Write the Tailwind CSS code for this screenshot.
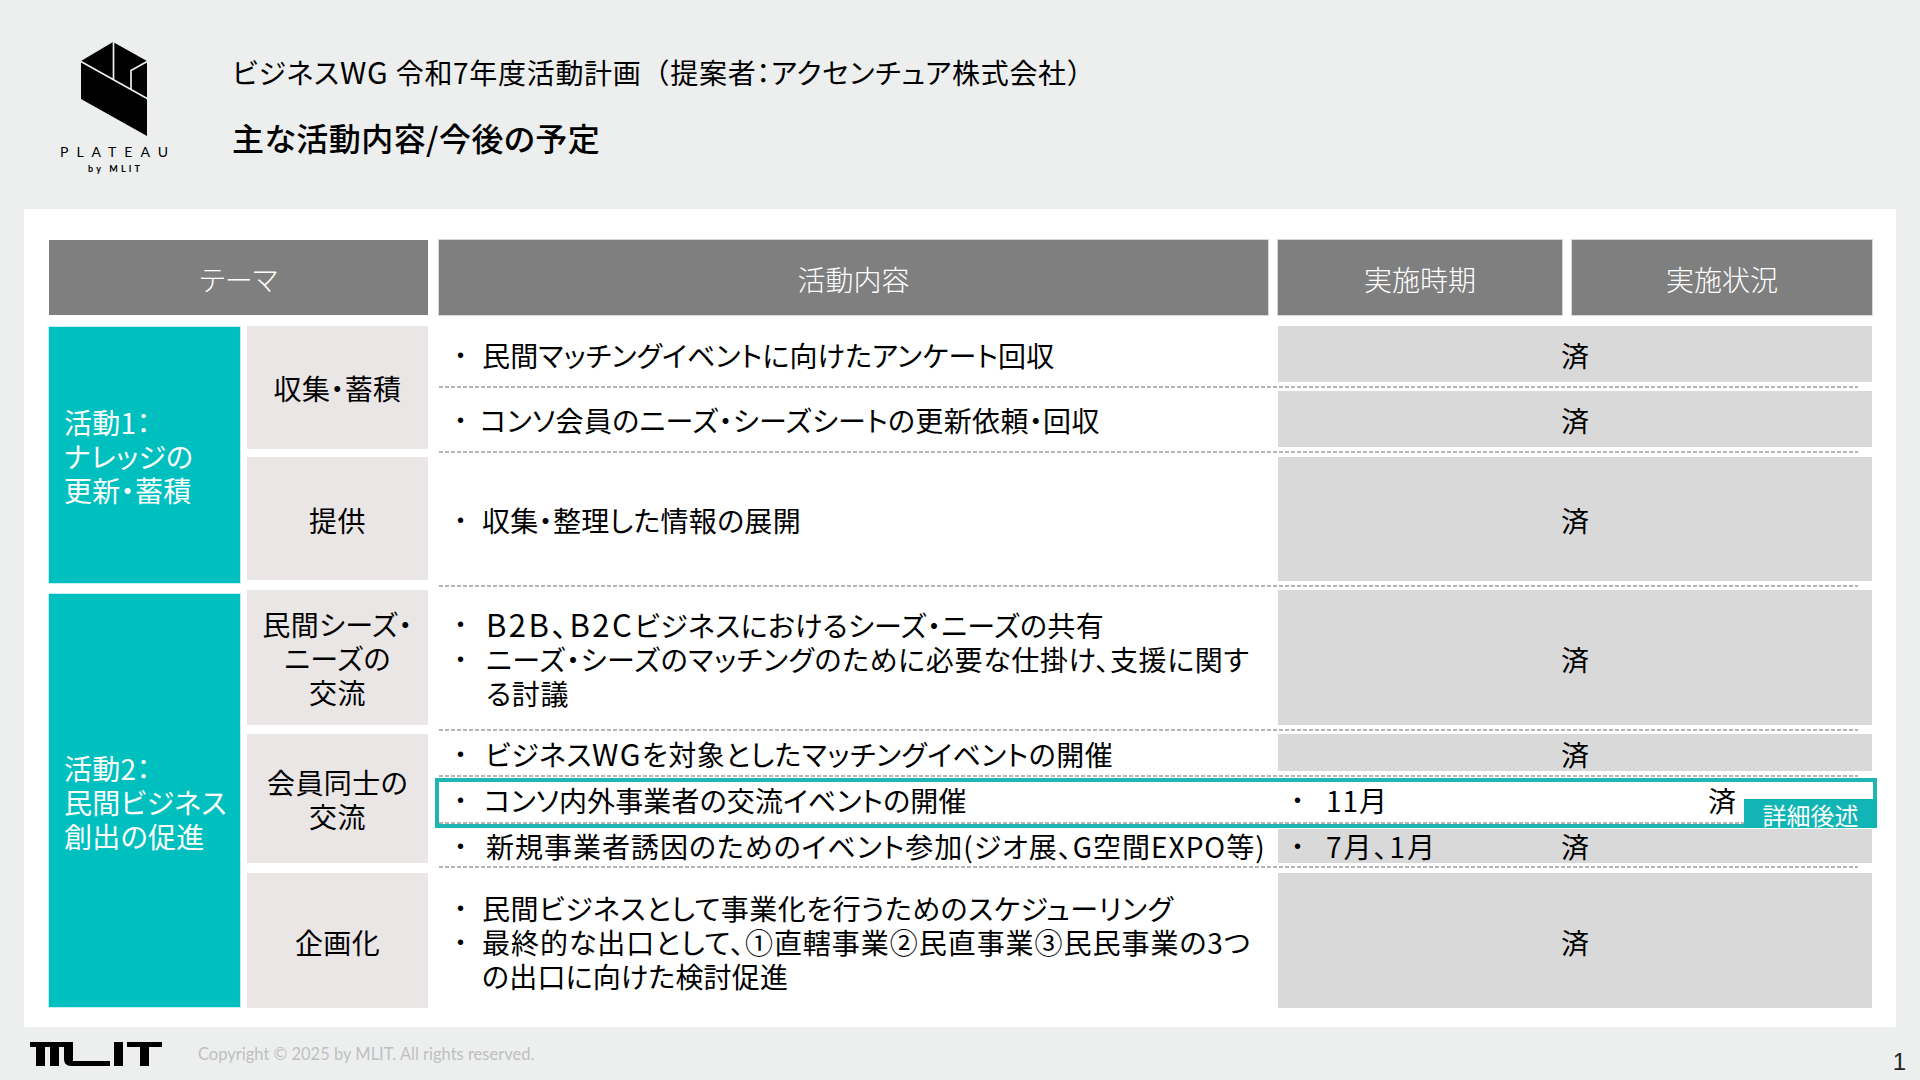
<!DOCTYPE html>
<html lang="ja">
<head>
<meta charset="UTF-8">
<title>ビジネスWG 令和7年度活動計画</title>
<script src="https://cdn.jsdelivr.net/npm/@tailwindcss/browser@4"></script>
</head>
<body class="w-[1920px] h-[1080px] overflow-hidden bg-[#edefef] text-black font-['Noto_Sans_CJK_JP',sans-serif] [font-feature-settings:'palt']">

<!-- header -->
<header class="h-[209px] flex pl-[40px] pt-[30px]">
  <svg width="150" height="150" viewBox="0 0 150 150" class="shrink-0">
    <path d="M41 31 L73 12 L107 31 V106 L41 69 Z" fill="#000"/>
    <path d="M73.500 11 V50 M40 31 L108 69 M108 31 L91 40.500 V59" fill="none" stroke="#edefef" stroke-width="1.700"/>
    <text x="20" y="127" font-size="14" textLength="108" lengthAdjust="spacing" font-family="Lato, sans-serif">PLATEAU</text>
    <text x="48" y="142" font-size="9" font-weight="700" textLength="52" lengthAdjust="spacing" font-family="Lato, sans-serif">by MLIT</text>
  </svg>
  <div class="ml-[42px] pt-[21px]">
    <h1 class="text-[28px] leading-[40px] font-normal tracking-[0.7px] whitespace-nowrap">ビジネス<span class="text-[30px] tracking-[1px]">WG</span> 令和7年度活動計画<span class="[font-feature-settings:normal]">（</span>提案者：アクセンチュア株式会社<span class="[font-feature-settings:normal]">）</span></h1>
    <h2 class="mt-[25px] text-[32px] leading-[40px] font-medium tracking-[0.45px]">主な活動内容/今後の予定</h2>
  </div>
</header>

<!-- table panel -->
<main class="mx-[24px] w-[1872px] h-[818px] bg-white pt-[31px] pl-[25px] text-[28px] leading-[34px] font-normal">
  <div class="flex text-white font-light">
    <div class="w-[379px] h-[75px] pt-[2px] bg-[#7f7f7f] flex items-center justify-center">テーマ</div>
    <div class="ml-[11px] w-[829px] h-[75px] pt-[2px] bg-[#7f7f7f] ring-1 ring-[#d8d8d8] flex items-center justify-center">活動内容</div>
    <div class="ml-[10px] w-[284px] h-[75px] pt-[2px] bg-[#7f7f7f] ring-1 ring-[#d8d8d8] flex items-center justify-center">実施時期</div>
    <div class="ml-[10px] w-[300px] h-[75px] pt-[2px] bg-[#7f7f7f] ring-1 ring-[#d8d8d8] flex items-center justify-center">実施状況</div>
  </div>

  <div class="flex mt-[11px]">
    <!-- theme column -->
    <div class="w-[191px] shrink-0 pt-[1px] text-white font-normal tracking-[0.3px]">
      <div class="h-[256px] pt-[2px] bg-[#00bfbf] ring-1 ring-[#c4eded] pl-[15px] flex items-center">活動1：<br>ナレッジの<br>更新・蓄積</div>
      <div class="mt-[11px] h-[413px] pt-[2px] bg-[#00bfbf] ring-1 ring-[#c4eded] pl-[15px] flex items-center">活動2：<br>民間ビジネス<br>創出の促進</div>
    </div>

    <!-- category column -->
    <div class="ml-[7px] w-[181px] shrink-0 text-center tracking-[0.4px]">
      <div class="h-[123px] bg-[#ebe6e6] flex items-center justify-center">収集・蓄積</div>
      <div class="mt-[8px] h-[123px] pt-[2px] bg-[#ebe6e6] flex items-center justify-center">提供</div>
      <div class="mt-[10px] h-[135px] bg-[#ebe6e6] flex items-center justify-center">民間シーズ・<br>ニーズの<br>交流</div>
      <div class="mt-[9px] h-[129px] bg-[#ebe6e6] flex items-center justify-center">会員同士の<br>交流</div>
      <div class="mt-[10px] h-[135px] pt-[3px] bg-[#ebe6e6] flex items-center justify-center">企画化</div>
    </div>

    <!-- activity rows -->
    <div class="ml-[11px] w-[1433px] shrink-0">
      <div class="flex h-[56px]">
        <div class="w-[829px] pt-[2px] pl-[18px] flex items-center whitespace-nowrap"><span class="w-[25px] font-['Liberation_Sans'] text-[20px]">•</span><span class="tracking-[0.17px]">民間マッチングイベントに向けたアンケート回収</span></div>
        <div class="ml-[10px] w-[594px] pt-[2px] bg-[#d9d9d9] flex items-center justify-center">済</div>
      </div>
      <div class="mt-[4px] mb-[3px] w-[1419px] h-[2px] bg-[repeating-linear-gradient(90deg,#b4b4b4_0_4px,transparent_4px_6px)]"></div>

      <div class="flex h-[56px]">
        <div class="w-[829px] pt-[2px] pl-[18px] flex items-center whitespace-nowrap"><span class="w-[23px] font-['Liberation_Sans'] text-[20px]">•</span><span class="tracking-[0.34px]">コンソ会員のニーズ・シーズシートの更新依頼・回収</span></div>
        <div class="ml-[10px] w-[594px] pt-[2px] bg-[#d9d9d9] flex items-center justify-center">済</div>
      </div>
      <div class="mt-[4px] mb-[4px] w-[1419px] h-[2px] bg-[repeating-linear-gradient(90deg,#b4b4b4_0_4px,transparent_4px_6px)]"></div>

      <div class="flex h-[124px]">
        <div class="w-[829px] pt-[2px] pl-[18px] flex items-center whitespace-nowrap"><span class="w-[25px] font-['Liberation_Sans'] text-[20px]">•</span><span class="tracking-[0.3px]">収集・整理した情報の展開</span></div>
        <div class="ml-[10px] w-[594px] pt-[2px] bg-[#d9d9d9] flex items-center justify-center">済</div>
      </div>
      <div class="mt-[4px] mb-[3px] w-[1419px] h-[2px] bg-[repeating-linear-gradient(90deg,#b4b4b4_0_4px,transparent_4px_6px)]"></div>

      <div class="flex h-[135px]">
        <div class="w-[829px] pt-[2px] pl-[18px] flex flex-col justify-center whitespace-nowrap">
          <div class="flex"><span class="w-[29px] font-['Liberation_Sans'] text-[20px]">•</span><span class="tracking-[0.3px]"><span class="text-[31px] tracking-[2.5px]">B2B、B2C</span>ビジネスにおけるシーズ・ニーズの共有</span></div>
          <div class="flex"><span class="w-[29px] font-['Liberation_Sans'] text-[20px]">•</span><span class="tracking-[0.67px]">ニーズ・シーズのマッチングのために必要な仕掛け、支援に関す<br>る討議</span></div>
        </div>
        <div class="ml-[10px] w-[594px] pt-[2px] bg-[#d9d9d9] flex items-center justify-center">済</div>
      </div>
      <div class="mt-[4px] mb-[3px] w-[1419px] h-[2px] bg-[repeating-linear-gradient(90deg,#b4b4b4_0_4px,transparent_4px_6px)]"></div>

      <div class="flex h-[37px]">
        <div class="w-[829px] pt-[2px] pl-[18px] flex items-center whitespace-nowrap"><span class="w-[28px] font-['Liberation_Sans'] text-[20px]">•</span><span class="tracking-[0.5px]">ビジネス<span class="text-[30px] tracking-[1.5px]">WG</span>を対象としたマッチングイベントの開催</span></div>
        <div class="ml-[10px] w-[594px] pt-[2px] bg-[#d9d9d9] flex items-center justify-center">済</div>
      </div>
      <div class="mt-[4px] w-[1419px] h-[2px] bg-[repeating-linear-gradient(90deg,#b4b4b4_0_4px,transparent_4px_6px)]"></div>

      <!-- highlighted row -->
      <div class="relative flex h-[45px]">
        <div class="absolute left-[-4px] right-[-5px] top-[1px] bottom-[-6px] border-4 border-[#1fb5b5] bg-white"></div>
        <div class="relative w-[829px] pl-[18px] flex items-center whitespace-nowrap"><span class="w-[27px] font-['Liberation_Sans'] text-[20px]">•</span><span class="tracking-[0.13px]">コンソ内外事業者の交流イベントの開催</span></div>
        <div class="relative ml-[10px] w-[284px] pl-[16px] flex items-center"><span class="w-[32px] font-['Liberation_Sans'] text-[20px]">•</span><span class="tracking-[1px]">11月</span></div>
        <div class="relative ml-[10px] w-[300px] flex items-center justify-center">済</div>
        <div class="absolute z-20 left-[1305px] right-[-5px] top-[22px] bottom-[-6px] bg-[#12b5b5] text-white text-[24px] leading-[29px] font-normal text-center pt-[1px]">詳細後述</div>
      </div>
      <div class="relative z-10 mb-[5px] w-[1419px] h-[2px] bg-[repeating-linear-gradient(90deg,#b4b4b4_0_4px,transparent_4px_6px)]"></div>

      <div class="flex h-[34px]">
        <div class="w-[829px] pl-[18px] flex items-center whitespace-nowrap"><span class="w-[29px] font-['Liberation_Sans'] text-[20px]">•</span><span class="tracking-[1px]">新規事業者誘因のためのイベント参加(ジオ展、G空間EXPO等)</span></div>
        <div class="ml-[10px] w-[594px] bg-[#d9d9d9] grid grid-cols-[1fr_auto_1fr] items-center">
          <div class="flex pl-[16px]"><span class="w-[32px] font-['Liberation_Sans'] text-[20px]">•</span><span class="tracking-[2px]">7月、1月</span></div>
          <div>済</div>
        </div>
      </div>
      <div class="mt-[3px] mb-[5px] w-[1419px] h-[2px] bg-[repeating-linear-gradient(90deg,#b4b4b4_0_4px,transparent_4px_6px)]"></div>

      <div class="flex h-[135px]">
        <div class="w-[829px] pt-[2px] pl-[18px] flex flex-col justify-center whitespace-nowrap">
          <div class="flex"><span class="w-[25px] font-['Liberation_Sans'] text-[20px]">•</span><span class="tracking-[0.5px]">民間ビジネスとして事業化を行うためのスケジューリング</span></div>
          <div class="flex"><span class="w-[25px] font-['Liberation_Sans'] text-[20px]">•</span><span><span class="tracking-[0.96px]">最終的な出口として、①直轄事業②民直事業③民民事業の3つ</span><br><span class="tracking-[0.2px]">の出口に向けた検討促進</span></span></div>
        </div>
        <div class="ml-[10px] w-[594px] pt-[2px] bg-[#d9d9d9] flex items-center justify-center">済</div>
      </div>
    </div>
  </div>
</main>

<!-- footer -->
<footer class="h-[53px] flex items-center pl-[30px] pr-[14px]">
  <svg width="132" height="24" viewBox="0 0 132 24" class="shrink-0">
    <path d="M0 0 H43 V5 H0 Z M6 5 H15 V24 H6 Z M20 5 H29 V24 H20 Z M34 5 H43 V19 H80 V24 H41 Q34 24 34 17 Z M84 0 H93 V24 H84 Z M97 0 H132 V5 H97 Z M110 5 H119 V24 H110 Z" fill="#000"/>
  </svg>
  <p class="ml-[36px] mt-[2px] font-['Lato',sans-serif] text-[16.5px] text-[#bfbfbf]">Copyright © 2025 by MLIT. All rights reserved.</p>
  <span class="ml-auto mt-[16px] font-['Liberation_Sans'] text-[24px] text-[#222]">1</span>
</footer>
</body>
</html>
